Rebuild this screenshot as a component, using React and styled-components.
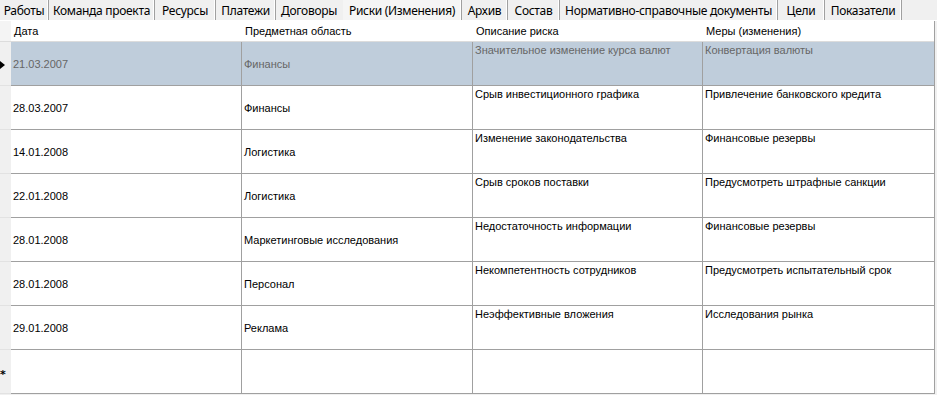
import React from "react";
import styled, { createGlobalStyle } from "styled-components";

const GlobalStyle = createGlobalStyle`
  html, body {
    margin: 0;
    padding: 0;
    background: #f0f0f0;
  }
  body {
    width: 937px;
    height: 395px;
    overflow: hidden;
    font-family: "Liberation Sans", Arial, sans-serif;
  }
`;

const tabs = [
  { label: "Работы", width: 49 },
  { label: "Команда проекта", width: 106 },
  { label: "Ресурсы", width: 61 },
  { label: "Платежи", width: 60 },
  { label: "Договоры", width: 67 },
  { label: "Риски (Изменения)", width: 119 },
  { label: "Архив", width: 46 },
  { label: "Состав", width: 52 },
  { label: "Нормативно-справочные документы", width: 218 },
  { label: "Цели", width: 47 },
  { label: "Показатели", width: 77 },
];
const activeTab = 5;

const columns = ["Дата", "Предметная область", "Описание риска", "Меры (изменения)"];

const rows = [
  ["21.03.2007", "Финансы", "Значительное изменение курса валют", "Конвертация валюты"],
  ["28.03.2007", "Финансы", "Срыв инвестиционного графика", "Привлечение банковского кредита"],
  ["14.01.2008", "Логистика", "Изменение законодательства", "Финансовые резервы"],
  ["22.01.2008", "Логистика", "Срыв сроков поставки", "Предусмотреть штрафные санкции"],
  ["28.01.2008", "Маркетинговые исследования", "Недостаточность информации", "Финансовые резервы"],
  ["28.01.2008", "Персонал", "Некомпетентность сотрудников", "Предусмотреть испытательный срок"],
  ["29.01.2008", "Реклама", "Неэффективные вложения", "Исследования рынка"],
];

const Page = styled.div`
  width: 937px;
  height: 395px;
  display: flex;
  flex-direction: column;
`;

const TabStrip = styled.div`
  display: flex;
  height: 21px;
  border-bottom: 1px solid #ffffff;
  box-sizing: border-box;
`;

const Tab = styled.div`
  width: ${(p) => p.$w}px;
  height: 20px;
  box-sizing: border-box;
  display: flex;
  align-items: center;
  justify-content: center;
  font-family: "Noto Sans", "Open Sans", sans-serif;
  font-size: 12px;
  letter-spacing: -0.3px;
  color: #000;
  white-space: nowrap;
  background: ${(p) => (p.$active ? "#f5f5f5" : "#f0f0f0")};
  border-right: ${(p) => (p.$hideSep ? "1px solid transparent" : "1px solid #a0a0a0")};
  box-shadow: ${(p) => (p.$hideSep ? "none" : "inset -1px 0 0 #ffffff")};
`;

const Grid = styled.div`
  display: grid;
  grid-template-columns: 11px 231px 231px 230px 231px;
  grid-template-rows: 21px repeat(8, 44px);
  background: #ffffff;
  width: 934px;
  border-right: 1px solid #a0a0a0;
  height: 373px;
`;

const HeaderCorner = styled.div`
  background: #f4f4f4;
  border-bottom: 1px solid #dcdcdc;
`;

const HeaderCell = styled.div`
  background: #ffffff;
  border-bottom: 1px solid #dcdcdc;
  font-size: 11px;
  color: #000;
  padding: 4px 0 0 3px;
  box-sizing: border-box;
`;

const RowHead = styled.div`
  background: #f0f0f0;
  border-bottom: 1px solid #e2e2e2;
  box-sizing: border-box;
  display: flex;
  align-items: center;
  font-size: 11px;
`;

const Cell = styled.div`
  box-sizing: border-box;
  border-right: ${(p) => (p.$last ? "none" : "1px solid #a0a0a0")};
  border-bottom: 1px solid #a0a0a0;
  background: ${(p) => (p.$selected ? "#bfcddb" : "#ffffff")};
  color: ${(p) => (p.$selected ? "#666666" : "#000000")};
  font-size: 11px;
  padding: ${(p) => (p.$top ? "2px 0 0 2px" : "1px 0 0 2px")};
  display: flex;
  align-items: ${(p) => (p.$top ? "flex-start" : "center")};
  white-space: nowrap;
  overflow: hidden;
`;

const Arrow = styled.svg`
  width: 5px;
  height: 8px;
  margin-top: 2px;
`;

const Star = styled.span`
  font-family: "DejaVu Sans", sans-serif;
  font-size: 11px;
  font-weight: bold;
  line-height: 1;
  margin: 6px 0 0 0;
`;

export default function App() {
  return (
    <>
      <GlobalStyle />
      <Page>
        <TabStrip>
          {tabs.map((t, i) => (
            <Tab
              key={t.label}
              $w={t.width}
              $active={i === activeTab}
              $hideSep={i === activeTab - 1}
            >
              {t.label}
            </Tab>
          ))}
        </TabStrip>
        <Grid>
          <HeaderCorner />
          {columns.map((c) => (
            <HeaderCell key={c}>{c}</HeaderCell>
          ))}
          {rows.map((r, i) => (
            <React.Fragment key={i}>
              <RowHead>
                {i === 0 && (
                  <Arrow viewBox="0 0 5 8">
                    <path d="M0 0 L5 4 L0 8 Z" fill="#000" />
                  </Arrow>
                )}
              </RowHead>
              {r.map((v, j) => (
                <Cell key={j} $selected={i === 0} $top={j >= 2} $last={j === 3}>
                  {v}
                </Cell>
              ))}
            </React.Fragment>
          ))}
          <RowHead>
            <Star>*</Star>
          </RowHead>
          {columns.map((c, j) => (
            <Cell key={c} $last={j === 3} />
          ))}
        </Grid>
      </Page>
    </>
  );
}
